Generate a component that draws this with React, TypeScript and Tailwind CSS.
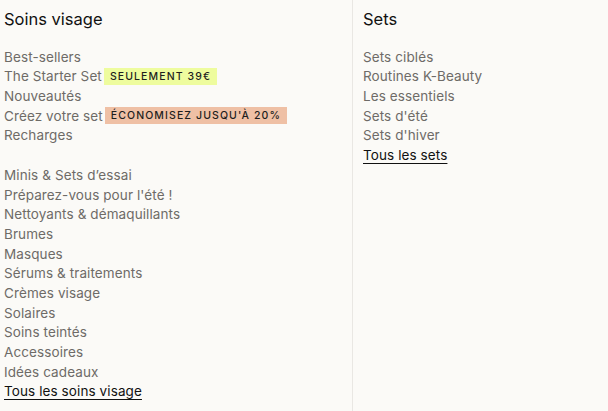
import React from "react";

const font = { fontFamily: "Inter, 'Noto Sans', sans-serif" };

const Item = ({ children, badge, badgeClass }: { children: React.ReactNode; badge?: string; badgeClass?: string }) => (
  <li className="flex items-center h-[19.7px] text-[13.5px] tracking-[0.1px] text-[#6e6b67] whitespace-nowrap">
    <span>{children}</span>
    {badge && (
      <span className={`ml-[2px] h-[17px] px-[6px] flex items-center text-[10.5px] font-medium tracking-[1.1px] text-[#1e1e1e] ${badgeClass}`}>
        {badge}
      </span>
    )}
  </li>
);

const AllLink = ({ children }: { children: React.ReactNode }) => (
  <li className="flex items-center h-[19.7px] text-[13.5px] tracking-[0.1px] text-[#111] whitespace-nowrap">
    <span className="underline underline-offset-[3px] decoration-[1px]">{children}</span>
  </li>
);

export default function App() {
  return (
    <div className="w-[608px] h-[411px] bg-[#fbfaf7] flex overflow-hidden" style={font}>
      <div className="w-[352px] pl-[4px] pt-[8px]">
        <h2 className="text-[16.5px] leading-[22px] font-normal text-[#111]">Soins visage</h2>
        <ul className="mt-[17px]">
          <Item>Best-sellers</Item>
          <Item badge="SEULEMENT 39€" badgeClass="bg-[#eefc9e]">The Starter Set</Item>
          <Item>Nouveautés</Item>
          <Item badge="ÉCONOMISEZ JUSQU'À 20%" badgeClass="bg-[#efc0a5]">Créez votre set</Item>
          <Item>Recharges</Item>
          <li className="h-[19.7px]" />
          <Item>Minis &amp; Sets d’essai</Item>
          <Item>Préparez-vous pour l'été !</Item>
          <Item>Nettoyants &amp; démaquillants</Item>
          <Item>Brumes</Item>
          <Item>Masques</Item>
          <Item>Sérums &amp; traitements</Item>
          <Item>Crèmes visage</Item>
          <Item>Solaires</Item>
          <Item>Soins teintés</Item>
          <Item>Accessoires</Item>
          <Item>Idées cadeaux</Item>
          <AllLink>Tous les soins visage</AllLink>
        </ul>
      </div>
      <div className="flex-1 border-l border-[#e9e7e3] pl-[10px] pt-[8px]">
        <h2 className="text-[16.5px] leading-[22px] font-normal text-[#111]">Sets</h2>
        <ul className="mt-[17px]">
          <Item>Sets ciblés</Item>
          <Item>Routines K-Beauty</Item>
          <Item>Les essentiels</Item>
          <Item>Sets d'été</Item>
          <Item>Sets d'hiver</Item>
          <AllLink>Tous les sets</AllLink>
        </ul>
      </div>
    </div>
  );
}
